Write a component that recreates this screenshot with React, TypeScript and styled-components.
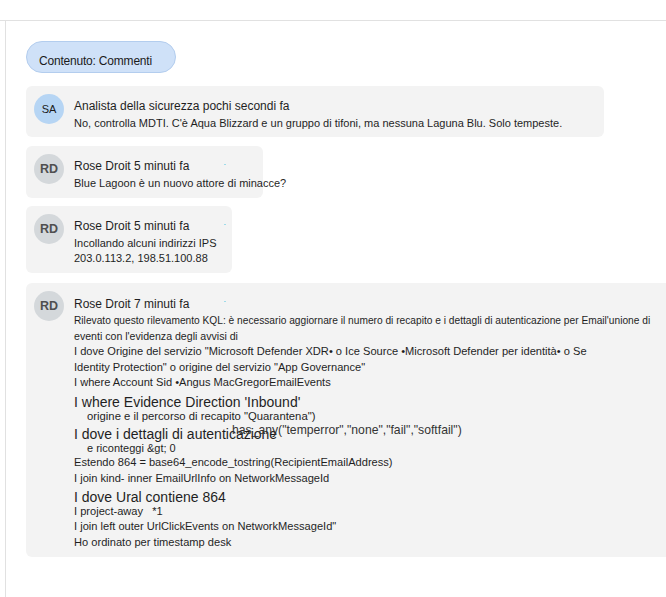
import React from 'react';
import styled, { createGlobalStyle } from 'styled-components';

const GlobalStyle = createGlobalStyle`
  html, body {
    margin: 0;
    padding: 0;
    background: #ffffff;
    overflow: hidden;
  }
  body {
    font-family: "Liberation Sans", Arial, sans-serif;
    color: #242424;
  }
`;

const Page = styled.div`
  width: 666px;
  height: 597px;
  display: flex;
  flex-direction: column;
  overflow: hidden;
`;

const TopBar = styled.header`
  flex: none;
  height: 20px;
  border-bottom: 1px solid #e1e1e1;
`;

const Workspace = styled.div`
  flex: 1;
  display: flex;
  min-height: 0;
`;

const Panel = styled.main`
  flex: 1;
  min-width: 0;
  margin-left: 5px;
  border-left: 1px solid #e1e1e1;
  padding: 20px 0 0 20px;
  display: flex;
  flex-direction: column;
  align-items: flex-start;
`;

const FilterPill = styled.div`
  box-sizing: border-box;
  width: 150px;
  height: 32px;
  padding: 11px 12px 0;
  border: 1px solid #b3cdee;
  border-radius: 16px;
  background: #cfe1f8;
  font-size: 12px;
  line-height: 17px;
  letter-spacing: -0.2px;
  color: #1b1b1b;
  white-space: nowrap;
  margin-bottom: 13px;
`;

const CommentCard = styled.section<{ $width: number; $top: number; $bottom?: number }>`
  position: relative;
  box-sizing: border-box;
  width: ${(p) => p.$width}px;
  flex: none;
  margin-top: ${(p) => p.$top}px;
  padding: 8px 8px ${(p) => p.$bottom ?? 6}px;
  border-radius: 6px;
  background: #f3f3f3;
  display: flex;
  align-items: flex-start;
  gap: 10px;
`;

const Avatar = styled.div<{ $bg: string; $fg: string; $bold?: boolean; $size: number }>`
  flex: none;
  width: 30px;
  height: 30px;
  border-radius: 50%;
  background: ${(p) => p.$bg};
  color: ${(p) => p.$fg};
  font-size: ${(p) => p.$size}px;
  font-weight: ${(p) => (p.$bold ? 700 : 400)};
  display: flex;
  align-items: center;
  justify-content: center;
`;

const TextColumn = styled.div`
  margin-top: 4.3px;
  display: flex;
  flex-direction: column;
  min-width: 0;
`;

const Author = styled.div`
  font-size: 12px;
  line-height: 17px;
  white-space: nowrap;
  color: #1f1f1f;
`;

const Message = styled.div`
  margin-top: 1px;
  font-size: 11px;
  line-height: 14.6px;
  white-space: nowrap;
  color: #1f1f1f;
`;

const QueryLine = styled.div<{ $size: number; $lh: number; $mt?: number; $indent?: number }>`
  position: relative;
  font-size: ${(p) => p.$size}px;
  line-height: ${(p) => p.$lh}px;
  margin-top: ${(p) => p.$mt ?? 0}px;
  padding-left: ${(p) => p.$indent ?? 0}px;
  white-space: pre;
  color: #1f1f1f;
`;

const StrayFragment = styled.span`
  position: absolute;
  left: 158px;
  top: -4px;
  font-size: 12.2px;
  line-height: 14px;
  color: #333333;
  white-space: pre;
`;

const PresenceMark = styled.span`
  position: absolute;
  left: 198px;
  top: 18px;
  width: 2px;
  height: 1px;
  background: #9fdbe9;
`;

type Line = { text: string; size: number; lh: number; mt?: number; indent?: number; overlay?: string };

const queryLines: Line[] = [
  {
    text: "Rilevato questo rilevamento KQL: è necessario aggiornare il numero di recapito e i dettagli di autenticazione per Email'unione di",
    size: 10.2,
    lh: 16,
  },
  { text: "eventi con l'evidenza degli avvisi di", size: 10.6, lh: 15.6 },
  {
    text: 'I dove Origine del servizio "Microsoft Defender XDR• o Ice Source •Microsoft Defender per identità• o Se',
    size: 11.1,
    lh: 15.6,
  },
  { text: 'Identity Protection" o origine del servizio "App Governance"', size: 11.1, lh: 15.6 },
  { text: 'I where Account Sid •Angus MacGregorEmailEvents', size: 11.1, lh: 15.6 },
  { text: "I where Evidence Direction 'Inbound'", size: 14, lh: 14, mt: 4 },
  { text: 'origine e il percorso di recapito "Quarantena")', size: 11.3, lh: 14, indent: 13 },
  {
    text: 'I dove i dettagli di autenticazione',
    size: 14,
    lh: 14,
    mt: 4,
    overlay: 'has_any("temperror","none","fail","softfail")',
  },
  { text: 'e riconteggi &gt; 0', size: 11, lh: 14, indent: 13 },
  { text: 'Estendo 864 = base64_encode_tostring(RecipientEmailAddress)', size: 11.1, lh: 15.6 },
  { text: 'I join kind- inner EmailUrlInfo on NetworkMessageId', size: 11.1, lh: 15.6 },
  { text: 'I dove Ural contiene 864', size: 14, lh: 14, mt: 4 },
  { text: 'I project-away   *1', size: 11.1, lh: 15 },
  { text: 'I join left outer UrlClickEvents on NetworkMessageId"', size: 11.1, lh: 15.6 },
  { text: 'Ho ordinato per timestamp desk', size: 11.1, lh: 15.6 },
];

const analyst = { bg: '#b6d5f4', fg: '#1b1b1b', bold: false, size: 11 };
const rose = { bg: '#d4d8db', fg: '#4f4f4f', bold: true, size: 12.5 };

export default function App() {
  return (
    <>
      <GlobalStyle />
      <Page>
        <TopBar />
        <Workspace>
          <Panel>
            <FilterPill>Contenuto: Commenti</FilterPill>

            <CommentCard $width={578} $top={0}>
              <Avatar $bg={analyst.bg} $fg={analyst.fg} $bold={analyst.bold} $size={analyst.size}>
                SA
              </Avatar>
              <TextColumn>
                <Author>Analista della sicurezza pochi secondi fa</Author>
                <Message>
                  No, controlla MDTI. C'è Aqua Blizzard e un gruppo di tifoni, ma nessuna Laguna Blu. Solo tempeste.
                </Message>
              </TextColumn>
            </CommentCard>

            <CommentCard $width={237} $top={9} $bottom={7}>
              <Avatar $bg={rose.bg} $fg={rose.fg} $bold={rose.bold} $size={rose.size}>
                RD
              </Avatar>
              <TextColumn>
                <Author>Rose Droit 5 minuti fa</Author>
                <Message>Blue Lagoon è un nuovo attore di minacce?</Message>
              </TextColumn>
              <PresenceMark />
            </CommentCard>

            <CommentCard $width={206} $top={8} $bottom={8}>
              <Avatar $bg={rose.bg} $fg={rose.fg} $bold={rose.bold} $size={rose.size}>
                RD
              </Avatar>
              <TextColumn>
                <Author>Rose Droit 5 minuti fa</Author>
                <Message>
                  Incollando alcuni indirizzi IPS
                  <br />
                  203.0.113.2, 198.51.100.88
                </Message>
              </TextColumn>
              <PresenceMark />
            </CommentCard>

            <CommentCard $width={660} $top={10} $bottom={7}>
              <Avatar $bg={rose.bg} $fg={rose.fg} $bold={rose.bold} $size={rose.size}>
                RD
              </Avatar>
              <TextColumn>
                <Author>Rose Droit 7 minuti fa</Author>
                {queryLines.map((l, i) => (
                  <QueryLine key={i} $size={l.size} $lh={l.lh} $mt={l.mt} $indent={l.indent}>
                    {l.text}
                    {l.overlay && <StrayFragment>{l.overlay}</StrayFragment>}
                  </QueryLine>
                ))}
              </TextColumn>
              <PresenceMark />
            </CommentCard>
          </Panel>
        </Workspace>
      </Page>
    </>
  );
}
